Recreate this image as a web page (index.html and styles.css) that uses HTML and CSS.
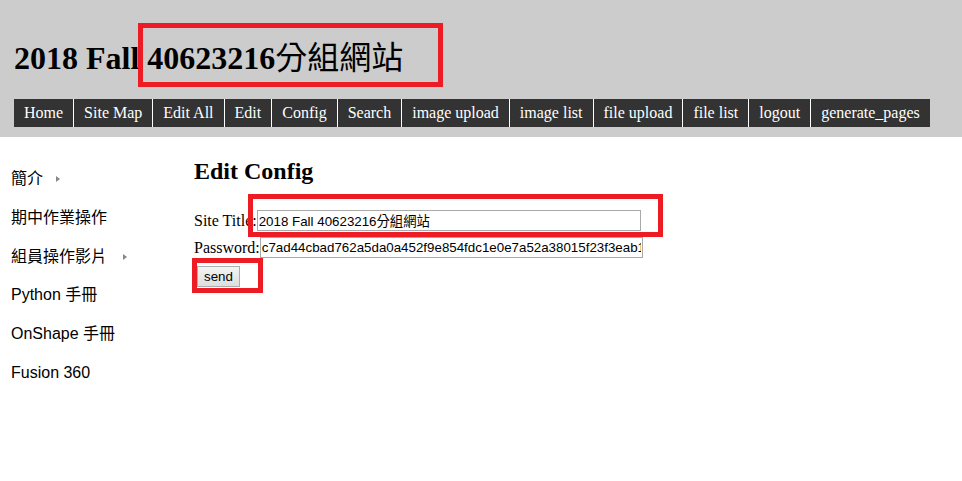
FILE: index.html
```html
<!DOCTYPE html>
<html>
<head>
<meta charset="utf-8">
<title>2018 Fall 40623216分組網站</title>
<link rel="stylesheet" href="styles.css">
</head>
<body>
<header class="header">
  <h1 class="site-title">2018 Fall <span class="mark-wrap">40623216<span class="cjk">分組網站</span><span class="mark mark-title"></span></span></h1>
  <nav class="nav">
    <a class="nav-item">Home</a>
    <a class="nav-item">Site Map</a>
    <a class="nav-item">Edit All</a>
    <a class="nav-item">Edit</a>
    <a class="nav-item">Config</a>
    <a class="nav-item">Search</a>
    <a class="nav-item">image upload</a>
    <a class="nav-item">image list</a>
    <a class="nav-item">file upload</a>
    <a class="nav-item">file list</a>
    <a class="nav-item">logout</a>
    <a class="nav-item">generate_pages</a>
  </nav>
</header>
<div class="layout">
  <aside class="sidebar">
    <a class="side-item">簡介<span class="tri"></span></a>
    <a class="side-item">期中作業操作</a>
    <a class="side-item">組員操作影片<span class="tri tri-wide"></span></a>
    <a class="side-item">Python 手冊</a>
    <a class="side-item">OnShape 手冊</a>
    <a class="side-item">Fusion 360</a>
  </aside>
  <main class="main">
    <h2 class="page-title">Edit Config</h2>
    <form class="form">
      <div class="row">
        <label class="label">Site Title:</label>
        <span class="field-wrap"><input class="input input-title" type="text" value="2018 Fall 40623216分組網站"><span class="mark mark-input"></span></span>
      </div>
      <div class="row">
        <label class="label">Password:</label>
        <input class="input input-pass" type="text" value="c7ad44cbad762a5da0a452f9e854fdc1e0e7a52a38015f23f3eab1f0c2d7">
      </div>
      <div class="row row-btn">
        <span class="btn-wrap"><button class="btn" type="button">send</button><span class="mark mark-btn"></span></span>
      </div>
    </form>
  </main>
</div>
</body>
</html>
```
FILE: styles.css
```css
html, body {
  margin: 0;
  padding: 0;
  background: #fff;
}
body {
  font-family: "Liberation Serif", "Noto Sans CJK TC", serif;
  color: #000;
}
.header {
  background: #cccccc;
  height: 137px;
  padding: 0 0 0 14px;
  box-sizing: border-box;
  overflow: hidden;
}
.site-title {
  margin: 0;
  padding-top: 35px;
  font-size: 32px;
  line-height: 40px;
  font-weight: bold;
  white-space: nowrap;
}
.cjk {
  font-family: "Noto Sans CJK TC", sans-serif;
  font-weight: normal;
  font-size: 32px;
  line-height: 40px;
}
.mark-wrap {
  position: relative;
}
.mark {
  position: absolute;
  border: 5px solid #ed1c24;
  box-sizing: border-box;
  pointer-events: none;
}
.mark-title {
  left: -9px;
  top: -17px;
  width: 305px;
  height: 64px;
}
.nav {
  display: flex;
  margin-top: 21px;
}
.nav-item {
  display: block;
  background: #333333;
  color: #fff;
  font-size: 16px;
  height: 28px;
  line-height: 28px;
  padding: 0 10px;
  border-right: 1px solid #fff;
  white-space: nowrap;
}
.nav-item:last-child {
  border-right: none;
}
.layout {
  display: flex;
}
.sidebar {
  width: 194px;
  flex: none;
  box-sizing: border-box;
  padding: 23px 0 0 11px;
}
.side-item {
  display: block;
  height: 38.8px;
  line-height: 38.8px;
  font-family: "Liberation Sans", "Noto Sans CJK TC", sans-serif;
  font-size: 16px;
  color: #000;
  white-space: nowrap;
}
.tri {
  display: inline-block;
  width: 0;
  height: 0;
  border-left: 4px solid #888;
  border-top: 3.5px solid transparent;
  border-bottom: 3.5px solid transparent;
  margin-left: 13px;
  vertical-align: 2px;
}
.tri-wide {
  margin-left: 16px;
}
.main {
  flex: 1;
  padding-top: 20px;
}
.page-title {
  margin: 0;
  font-size: 24px;
  line-height: 28px;
  font-weight: bold;
}
.form {
  margin-top: 22px;
}
.row {
  display: flex;
  align-items: center;
  height: 27px;
  font-size: 16px;
}
.label {
  white-space: nowrap;
}
.field-wrap, .btn-wrap {
  position: relative;
  display: inline-block;
}
.input {
  font-family: "Liberation Sans", "Noto Sans CJK TC", sans-serif;
  font-size: 13.33px;
  height: 21px;
  box-sizing: border-box;
  border: 1px solid #a9a9a9;
  padding: 0 1px;
  margin: 0;
  display: block;
  color: #000;
}
.input-title {
  width: 384px;
}
.input-pass {
  width: 383px;
}
.mark-input {
  left: -9px;
  top: -16px;
  width: 415px;
  height: 43px;
}
.row-btn {
  height: auto;
  margin-top: 5px;
  padding-left: 3px;
}
.btn {
  font-family: "Liberation Sans", sans-serif;
  font-size: 13.33px;
  height: 21px;
  padding: 0 6px;
  margin: 0;
  border: 1px solid #adadad;
  background: linear-gradient(#f4f4f4, #dedede);
  color: #000;
  display: block;
}
.mark-btn {
  left: -5px;
  top: -8px;
  width: 71px;
  height: 35px;
}
```
